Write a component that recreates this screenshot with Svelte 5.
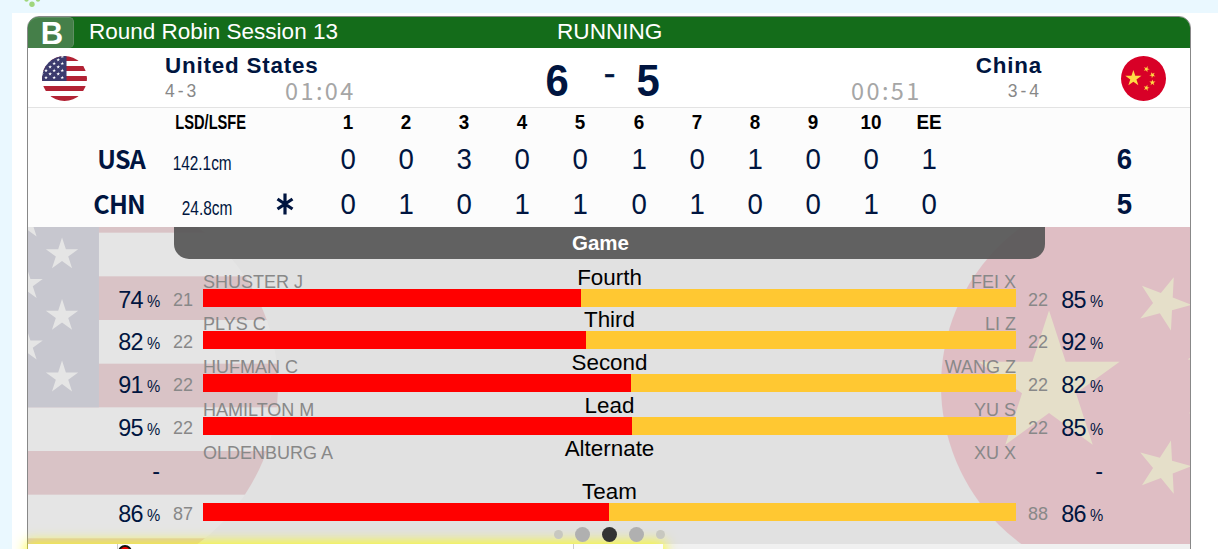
<script lang="ts">
  interface PositionStat {
    position: string;
    home: { name: string; pct: number | null; shots: number | null };
    away: { name: string; pct: number | null; shots: number | null };
    split: number;
  }

  const ends = ['1', '2', '3', '4', '5', '6', '7', '8', '9', '10', 'EE'];

  const lines = [
    { code: 'USA', lsd: '142.1cm', hammer: false, scores: [0, 0, 3, 0, 0, 1, 0, 1, 0, 0, 1], total: 6 },
    { code: 'CHN', lsd: '24.8cm', hammer: true, scores: [0, 1, 0, 1, 1, 0, 1, 0, 0, 1, 0], total: 5 }
  ];

  const stats: PositionStat[] = [
    { position: 'Fourth', home: { name: 'SHUSTER J', pct: 74, shots: 21 }, away: { name: 'FEI X', pct: 85, shots: 22 }, split: 46.5 },
    { position: 'Third', home: { name: 'PLYS C', pct: 82, shots: 22 }, away: { name: 'LI Z', pct: 92, shots: 22 }, split: 47.1 },
    { position: 'Second', home: { name: 'HUFMAN C', pct: 91, shots: 22 }, away: { name: 'WANG Z', pct: 82, shots: 22 }, split: 52.6 },
    { position: 'Lead', home: { name: 'HAMILTON M', pct: 95, shots: 22 }, away: { name: 'YU S', pct: 85, shots: 22 }, split: 52.8 },
    { position: 'Alternate', home: { name: 'OLDENBURG A', pct: null, shots: null }, away: { name: 'XU X', pct: null, shots: null }, split: 0 },
    { position: 'Team', home: { name: '', pct: 86, shots: 87 }, away: { name: '', pct: 86, shots: 88 }, split: 49.9 }
  ];

  // Columns of the canton, alternating between two vertical offsets
  const usStars: [number, number][] = [];
  for (let col = 0; col < 6; col++) {
    const x = 20.27 - col * 4.06;
    const first = col % 2 === 0 ? 0.45 : 3.85;
    for (let y = first; y < 24; y += 7.05) usStars.push([x, y]);
  }

  function star(cx: number, cy: number, r: number, rotate = 0): string {
    return Array.from({ length: 10 }, (_, i) => {
      const radius = i % 2 === 0 ? r : r * 0.382;
      const a = ((i * 36 - 90 + rotate) * Math.PI) / 180;
      return `${(cx + radius * Math.cos(a)).toFixed(2)},${(cy + radius * Math.sin(a)).toFixed(2)}`;
    }).join(' ');
  }
</script>

{#snippet usa(id: string)}
  <svg viewBox="0 0 45 45">
    <clipPath {id}><circle cx="22.5" cy="22.5" r="22.5" /></clipPath>
    <g clip-path="url(#{id})">
      <rect width="45" height="45" fill="#fff" />
      {#each [0, 10, 20, 30, 40] as y}
        <rect {y} width="45" height="5" fill="#b22234" />
      {/each}
      <rect width="24.5" height="25" fill="#3c3b6e" />
      {#each usStars as [x, y]}
        <polygon points={star(x, y, 1.95)} fill="#fff" />
      {/each}
    </g>
  </svg>
{/snippet}

{#snippet china()}
  <svg viewBox="0 0 45 45">
    <circle cx="22.5" cy="22.5" r="22.5" fill="#d80027" />
    <g fill="#ffda44">
      <polygon points={star(12.37, 22.4, 8.5)} />
      <polygon points={star(25.5, 13.1, 3.2, 21)} />
      <polygon points={star(31.4, 19, 3.2, 45)} />
      <polygon points={star(31.4, 26.6, 3.2, 0)} />
      <polygon points={star(25.5, 31.9, 3.2, 15)} />
    </g>
  </svg>
{/snippet}

{#snippet percent(value: number | null)}
  <div class="pct">
    {#if value === null}<span class="none">-</span>{:else}<span>{value}</span><small>%</small>{/if}
  </div>
{/snippet}

<div class="page">
  <svg class="logo" width="20" height="8" viewBox="0 0 20 8">
    <g fill="#a0d67c">
      <circle cx="4.5" cy="-0.5" r="2.2" />
      <circle cx="10" cy="4.3" r="2.7" />
      <circle cx="16" cy="-0.5" r="2.2" />
    </g>
  </svg>

  <main>
    <div class="card">
      <header>
        <span class="sheet">B</span>
        <span class="session">Round Robin Session 13</span>
        <span class="status">RUNNING</span>
      </header>

      <section class="teams">
        <div class="flag">{@render usa('usa-small')}</div>
        <div class="team">
          <h2>United States</h2>
          <div class="meta"><span class="record">4-3</span><span class="clock">01:04</span></div>
        </div>
        <div class="score">
          <b>6</b><i>-</i><b>5</b>
        </div>
        <div class="team away">
          <h2>China</h2>
          <div class="meta"><span class="clock">00:51</span><span class="record">3-4</span></div>
        </div>
        <div class="flag away">{@render china()}</div>
      </section>

      <section class="linescore">
        <div class="line head">
          <span></span>
          <span class="lsd"><span>LSD/LSFE</span></span>
          <span></span>
          {#each ends as end}<span class="end">{end}</span>{/each}
          <span></span>
        </div>
        {#each lines as line}
          <div class="line">
            <span class="code">{line.code}</span>
            <span class="lsd"><span>{line.lsd}</span></span>
            <span class="hammer">
              {#if line.hammer}
                <svg width="18" height="22" viewBox="0 0 18 22" stroke="#001540" stroke-width="3.2">
                  <path d="M9 0.5V21.5M1.5 6L16.5 16M1.5 16L16.5 6" />
                </svg>
              {/if}
            </span>
            {#each line.scores as score}<span class="end">{score}</span>{/each}
            <span class="total"><span>{line.total}</span></span>
          </div>
        {/each}
      </section>

      <section class="stats">
        <div class="watermark left">{@render usa('usa-large')}</div>
        <div class="watermark right">{@render china()}</div>
        <h3>Game</h3>
        <div class="rows">
          {#each stats as row}
            <div class="row">
              {@render percent(row.home.pct)}
              <div class="shots">{row.home.shots ?? ''}</div>
              <div class="compare">
                <div class="names">
                  <span>{row.home.name}</span>
                  <strong>{row.position}</strong>
                  <span>{row.away.name}</span>
                </div>
                {#if row.split}
                  <div class="bar"><div class="fill" style="width: {row.split}%"></div></div>
                {/if}
              </div>
              <div class="shots">{row.away.shots ?? ''}</div>
              {@render percent(row.away.pct)}
            </div>
          {/each}
        </div>
        <div class="dots">
          <span class="tiny"></span><span></span><span class="active"></span><span></span><span class="tiny"></span>
        </div>
      </section>

      <section class="shotlog">
        <div class="entry">
          <div class="cell num"></div>
          <div class="cell rock">
            <svg width="14" height="14" viewBox="0 0 14 14">
              <circle cx="7" cy="7" r="6" fill="#f00000" stroke="#111" stroke-width="2" />
            </svg>
          </div>
          <div class="cell rest"></div>
        </div>
      </section>
    </div>
  </main>
</div>

<style>
  :global(body) {
    overflow: hidden;
  }

  .page {
    box-sizing: border-box;
    height: 549px;
    overflow: hidden;
    background: #eaf8ff;
    padding-left: 12px;
    font-family: 'Liberation Sans', Arial, sans-serif;
    font-size: 22.4px;
    color: #001540;
  }

  .logo {
    display: block;
    margin-left: 10px;
  }

  main {
    margin-top: 5px;
    padding: 3px 27px 0 15px;
    background: #fff;
  }

  .card {
    box-sizing: border-box;
    height: 600px;
    border: 1px solid #888;
    border-radius: 12px 12px 0 0;
  }

  header {
    display: grid;
    grid-template-columns: 46px 483px 1fr;
    grid-template-rows: 31px;
    height: 31px;
    line-height: 30px;
    background: #146c1a;
    color: #fff;
    border-radius: 11px 11px 0 0;
  }

  .sheet {
    box-sizing: border-box;
    border: 1px solid #5f8f62;
    border-left: 0;
    border-bottom: 0;
    border-radius: 11px 5px 5px 0;
    background: #457f49;
    font-size: 31px;
    font-weight: bold;
    text-align: center;
    line-height: 31px;
    padding-left: 3px;
  }

  .session {
    padding-left: 15px;
    font-size: 22.5px;
  }

  .status {
    font-size: 22.6px;
  }

  .teams {
    display: flex;
    height: 59px;
    border-bottom: 1px solid #e3e3e3;
  }

  .flag {
    width: 45px;
    height: 45px;
    margin: 8px 0 0 14px;
  }

  .flag.away {
    margin: 8px 24px 0 0;
  }

  svg {
    display: block;
  }

  .flag svg {
    width: 100%;
    height: 100%;
  }

  .team {
    width: 340px;
    margin-left: 78px;
  }

  .team.away {
    width: 190px;
    margin: 0 79px 0 auto;
    text-align: right;
  }

  h2 {
    margin: 5px 0 0;
    font-size: 22.4px;
    line-height: 26px;
    letter-spacing: 0.8px;
  }

  .meta {
    display: flex;
    margin-top: -1px;
    line-height: 26px;
  }

  .record {
    width: 120px;
    font-size: 17.5px;
    letter-spacing: 3px;
    color: #888;
  }

  .away .record {
    width: auto;
    margin-left: auto;
  }

  .clock {
    font-family: 'Noto Sans CJK SC', sans-serif;
    font-size: 23.5px;
    line-height: 24px;
    letter-spacing: 2.4px;
    color: #a6a6a6;
  }

  .away .clock {
    margin-left: -1px;
  }

  .score {
    display: flex;
    width: 120px;
    margin-left: 40px;
    line-height: 66px;
  }

  .score b {
    width: 24px;
    font-size: 44px;
    transform: scaleX(0.95);
  }

  .score i {
    width: 67px;
    font-size: 35px;
    font-style: normal;
    text-align: center;
    line-height: 50px;
    padding-left: 14px;
    box-sizing: border-box;
    -webkit-text-stroke: 0.5px #001540;
  }

  .linescore {
    height: 119px;
    background: #fcfcfc;
  }

  .line {
    display: grid;
    grid-template-columns: 117px 87px 86.8px repeat(11, 58.15px) 1fr;
    height: 45px;
    line-height: 44px;
  }

  .line.head {
    height: 29px;
    line-height: 28px;
    font-size: 20px;
    font-weight: bold;
    color: #000;
  }

  .code {
    font-family: 'Noto Sans CJK SC', sans-serif;
    font-weight: bold;
    font-size: 25px;
    line-height: 42px;
    letter-spacing: -0.8px;
    text-align: right;
  }

  .lsd {
    text-align: right;
    font-size: 20.5px;
    line-height: 51px;
  }

  .lsd span {
    display: inline-block;
    transform: scaleX(0.75);
    transform-origin: right;
  }

  .head .lsd {
    line-height: inherit;
    margin-right: -14px;
  }

  .head .lsd span {
    transform: scaleX(0.715);
  }

  .hammer {
    padding: 11px 0 0 44px;
  }

  .end {
    text-align: center;
    font-size: 30px;
    transform: scaleX(0.92);
  }

  .head .end {
    font-size: 20.5px;
  }

  .total {
    padding-left: 157.6px;
    font-size: 30px;
    font-weight: bold;
  }

  .total span {
    display: inline-block;
    transform: scaleX(0.92);
  }

  .stats {
    position: relative;
    height: 317px;
    overflow: hidden;
    background: #e1e1e1;
  }

  .watermark {
    position: absolute;
    top: -38.5px;
    width: 393px;
    height: 393px;
    opacity: 0.15;
  }

  .watermark.left {
    left: -143px;
  }

  .watermark.right {
    right: -144px;
  }

  h3 {
    position: relative;
    box-sizing: border-box;
    width: 871px;
    height: 32px;
    margin: 0 0 0 146px;
    padding-right: 18px;
    border-radius: 0 0 15px 15px;
    background: rgba(86, 86, 86, 0.92);
    color: #fff;
    font-size: 20.5px;
    line-height: 32px;
    text-align: center;
  }

  .rows {
    position: relative;
    margin-top: 4.7px;
  }

  .row {
    display: grid;
    grid-template-columns: 132px 33px 10px 813px 32px 55px;
    height: 42.8px;
  }

  .pct {
    text-align: right;
    line-height: 26px;
    padding-top: 23px;
    font-size: 23.4px;
  }

  .pct span {
    letter-spacing: -0.8px;
  }

  .pct small {
    display: inline-block;
    margin-left: 3px;
    font-size: 16px;
    transform: translateY(-1px) scaleX(0.93);
    transform-origin: right;
  }

  .pct .none {
    letter-spacing: 0;
  }

  .shots {
    padding-top: 24px;
    text-align: right;
    font-size: 18px;
    line-height: 24px;
    color: #888;
  }

  .compare {
    grid-column: 4;
  }

  .names {
    display: grid;
    grid-template-columns: 1fr auto 1fr;
    height: 25px;
    line-height: 27px;
    color: #000;
  }

  .names span {
    font-size: 18px;
    line-height: 36px;
    color: #888;
  }

  .names span:last-child {
    text-align: right;
  }

  .names strong {
    font-weight: normal;
  }

  .bar {
    height: 18px;
    background: #ffc832;
  }

  .fill {
    height: 100%;
    background: #f00;
  }

  .dots {
    position: relative;
    z-index: 2;
    display: flex;
    justify-content: center;
    align-items: center;
    gap: 12px;
    height: 15px;
    margin-top: 6.5px;
  }

  .dots span {
    width: 15px;
    height: 15px;
    border-radius: 50%;
    background: #b0b0b0;
  }

  .dots .active {
    background: #333;
  }

  .dots .tiny {
    width: 9px;
    height: 9px;
    background: #c8c8c0;
  }

  .shotlog {
    height: 60px;
    background: #f0f0f0;
  }

  .entry {
    position: relative;
    display: flex;
    width: 635px;
    height: 50px;
    background: #fff;
    box-shadow: 0 0 12px 2px rgba(255, 255, 0, 0.85);
  }

  .cell {
    box-sizing: border-box;
    border-right: 1px solid #ccc;
  }

  .num {
    width: 90px;
  }

  .rock {
    width: 456px;
    padding: 1px 0 0;
  }

  .rest {
    flex: 1;
    border: 0;
    background: #fdfdfd;
  }
</style>
